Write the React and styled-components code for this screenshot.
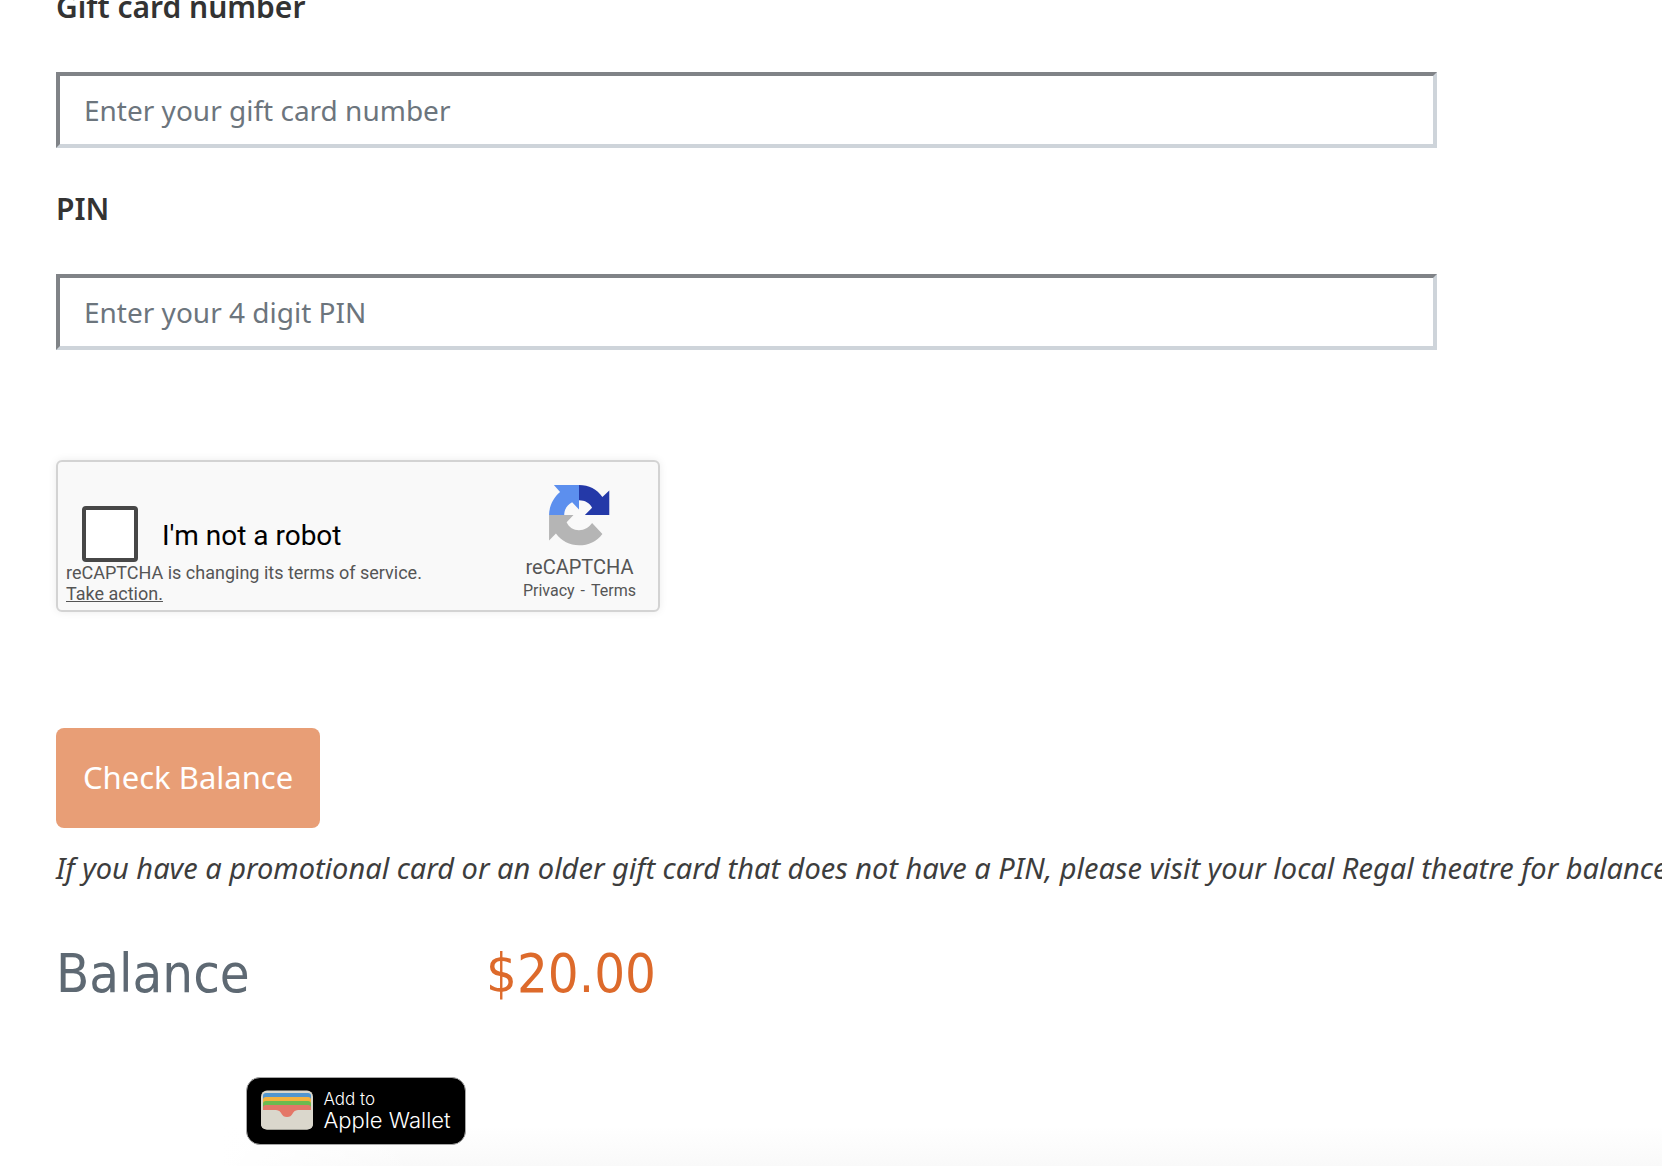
import React, { useState } from 'react';
import styled, { createGlobalStyle } from 'styled-components';

const GlobalStyle = createGlobalStyle`
  * {
    box-sizing: border-box;
  }

  body {
    margin: 0;
    font-family: 'Noto Sans', 'Open Sans', sans-serif;
    color: #333;
    background-color: #fff;
  }
`;

const Page = styled.main`
  min-height: 100vh;
  padding: 0 0 20px 56px;
  overflow: hidden;
  background:
    linear-gradient(to right, #fff 220px, rgba(255, 255, 255, 0) 420px),
    linear-gradient(to top, #f9f9f9, #fff 40px);
`;

const Form = styled.form`
  display: flex;
  flex-direction: column;
  align-items: flex-start;
  margin-top: -13px;
`;

const Field = styled.div`
  display: flex;
  flex-direction: column;
  gap: 45px;
  width: 86%;
  margin-bottom: 41px;
`;

const Label = styled.label`
  font-size: 30px;
  font-weight: 600;
  line-height: 40px;
`;

const Input = styled.input`
  width: 100%;
  height: 76px;
  padding: 0 24px;
  font-family: inherit;
  font-size: 28px;
  color: #333;
  background-color: #fff;
  border: 4px solid;
  border-color: #808387 #ced4da #ced4da #808387;
  border-radius: 0;

  &::placeholder {
    color: #6c757d;
    opacity: 1;
  }
`;

const Captcha = styled.div`
  display: flex;
  justify-content: space-between;
  width: 604px;
  height: 152px;
  margin: 69px 0 116px;
  padding: 0 22px 0 8px;
  font-family: Roboto, sans-serif;
  color: #555;
  background-color: #f9f9f9;
  border: 2px solid #d3d3d3;
  border-radius: 6px;
  box-shadow: 0 0 8px rgba(0, 0, 0, 0.08);
`;

const CaptchaMain = styled.div`
  padding-top: 44px;
`;

const CaptchaCheck = styled.div`
  display: flex;
  align-items: center;
  gap: 24px;
  padding-left: 16px;
`;

const Checkbox = styled.input`
  appearance: none;
  width: 56px;
  height: 56px;
  margin: 0;
  background-color: #fff;
  border: 4px solid #474747;
  border-radius: 4px;

  &:checked {
    background-color: #4a90e2;
  }
`;

const CheckLabel = styled.label`
  padding-top: 2px;
  font-size: 28px;
  color: #000;
`;

const Notice = styled.p`
  margin: 0;
  font-size: 18px;
  line-height: 21px;
`;

const TextLink = styled.a`
  color: inherit;
  text-decoration: ${(props) => (props.$underline ? 'underline' : 'none')};
`;

const CaptchaBrand = styled.div`
  display: flex;
  flex-direction: column;
  align-items: center;
  padding-top: 21px;
`;

const BrandName = styled.div`
  margin-top: 6px;
  font-size: 20px;
  line-height: 28px;
`;

const BrandLinks = styled.div`
  display: flex;
  gap: 6px;
  font-size: 16px;
  line-height: 20px;
`;

const CheckButton = styled.button`
  height: 100px;
  padding: 0 27px 2px;
  font-family: inherit;
  font-size: 31px;
  color: #fff;
  background-color: #e89e76;
  border: none;
  border-radius: 8px;
  cursor: pointer;
`;

const Note = styled.p`
  margin: 20px 0 54px;
  font-size: 29px;
  font-style: italic;
  line-height: 40px;
  white-space: nowrap;
  color: #3d3d3d;
`;

const Result = styled.section`
  display: flex;
  flex-direction: column;
  align-items: center;
  gap: 71px;
  width: 600px;
`;

const BalanceRow = styled.div`
  display: flex;
  justify-content: space-between;
  width: 100%;
  font-family: Tahoma, 'DejaVu Sans Condensed', 'DejaVu Sans', sans-serif;
  font-size: 54px;
  line-height: 64px;
`;

const BalanceTitle = styled.span`
  color: #5e6973;
`;

const Amount = styled.span`
  color: #dd6a2b;
`;

const WalletButton = styled.button`
  display: flex;
  align-items: center;
  gap: 10px;
  height: 68px;
  padding: 0 14px 2px;
  font-family: Inter, sans-serif;
  font-weight: 300;
  text-align: left;
  color: #fff;
  background-color: #000;
  border: 1px solid #a6a6a6;
  border-radius: 14px;
  cursor: pointer;
`;

const WalletText = styled.span`
  display: flex;
  flex-direction: column;
  font-size: 22px;
  line-height: 23px;
`;

const WalletSmall = styled.small`
  font-size: 17px;
  line-height: 20px;
`;

const CaptchaLogo = () => (
  <svg width="64" height="64" viewBox="27 27 186 186" aria-hidden="true">
    <path
      fill="#b5b5b5"
      d="M33 120H104L84 141C91 156 104 164 120 164C136 164 149 156 158 143L188 175C171 197 148 208 120 208C93 208 69 196 53 174L33 194Z"
    />
    <path
      fill="#5c8fee"
      d="M33 120C33 95 45 70 65 53L47 33H120V104L100 83C86 90 77 104 77 120Z"
    />
    <path
      fill="#2439a8"
      d="M120 33C149 33 172 45 188 68L208 49V120H137L158 99C151 85 137 77 120 77Z"
    />
  </svg>
);

const WalletIcon = () => (
  <svg width="52" height="40" viewBox="0 0 52 40" aria-hidden="true">
    <rect width="52" height="39" y="0.5" rx="6" fill="#dad7cc" />
    <path fill="#5296ce" d="M2 6q0-3 3-3h42q3 0 3 3v6H2z" />
    <path fill="#f4b23f" d="M2 10q0-3 3-3h42q3 0 3 3v6H2z" />
    <path fill="#6dbb4f" d="M2 14q0-3 3-3h42q3 0 3 3v6H2z" />
    <path fill="#e47768" d="M2 18q0-3 3-3h42q3 0 3 3v4H2z" />
    <path fill="#dad7cc" d="M0 20h15c3 0 4 1 5 3 2 3 3 4 6 4s4-1 6-4c1-2 2-3 5-3h15v14q0 5-6 5.500H6q-6-.5-6-5.500z" />
    <path fill="#e47768" d="M14 19h24v1h-1c-3 0-4 1-5 3-2 3-3 4-6 4s-4-1-6-4c-1-2-2-3-5-3h-1z" />
  </svg>
);

const App = () => {
  const [card, setCard] = useState('');
  const [pin, setPin] = useState('');
  const [checked, setChecked] = useState(false);

  return (
    <>
      <GlobalStyle />
      <Page>
        <Form onSubmit={(e) => e.preventDefault()}>
          <Field>
            <Label htmlFor="card">Gift card number</Label>
            <Input
              id="card"
              type="text"
              placeholder="Enter your gift card number"
              value={card}
              onChange={(e) => setCard(e.target.value)}
            />
          </Field>
          <Field>
            <Label htmlFor="pin">PIN</Label>
            <Input
              id="pin"
              type="text"
              placeholder="Enter your 4 digit PIN"
              value={pin}
              onChange={(e) => setPin(e.target.value)}
            />
          </Field>
          <Captcha>
            <CaptchaMain>
              <CaptchaCheck>
                <Checkbox
                  id="robot"
                  type="checkbox"
                  checked={checked}
                  onChange={(e) => setChecked(e.target.checked)}
                />
                <CheckLabel htmlFor="robot">I'm not a robot</CheckLabel>
              </CaptchaCheck>
              <Notice>
                reCAPTCHA is changing its terms of service.
                <br />
                <TextLink href="#action" $underline>Take action.</TextLink>
              </Notice>
            </CaptchaMain>
            <CaptchaBrand>
              <CaptchaLogo />
              <BrandName>reCAPTCHA</BrandName>
              <BrandLinks>
                <TextLink href="#privacy">Privacy</TextLink>
                <span>-</span>
                <TextLink href="#terms">Terms</TextLink>
              </BrandLinks>
            </CaptchaBrand>
          </Captcha>
          <CheckButton type="submit">Check Balance</CheckButton>
        </Form>
        <Note>
          If you have a promotional card or an older gift card that does not have a PIN, please visit your local Regal theatre for balance
        </Note>
        <Result>
          <BalanceRow>
            <BalanceTitle>Balance</BalanceTitle>
            <Amount>$20.00</Amount>
          </BalanceRow>
          <WalletButton type="button">
            <WalletIcon />
            <WalletText>
              <WalletSmall>Add to</WalletSmall>
              Apple Wallet
            </WalletText>
          </WalletButton>
        </Result>
      </Page>
    </>
  );
};

export default App;
